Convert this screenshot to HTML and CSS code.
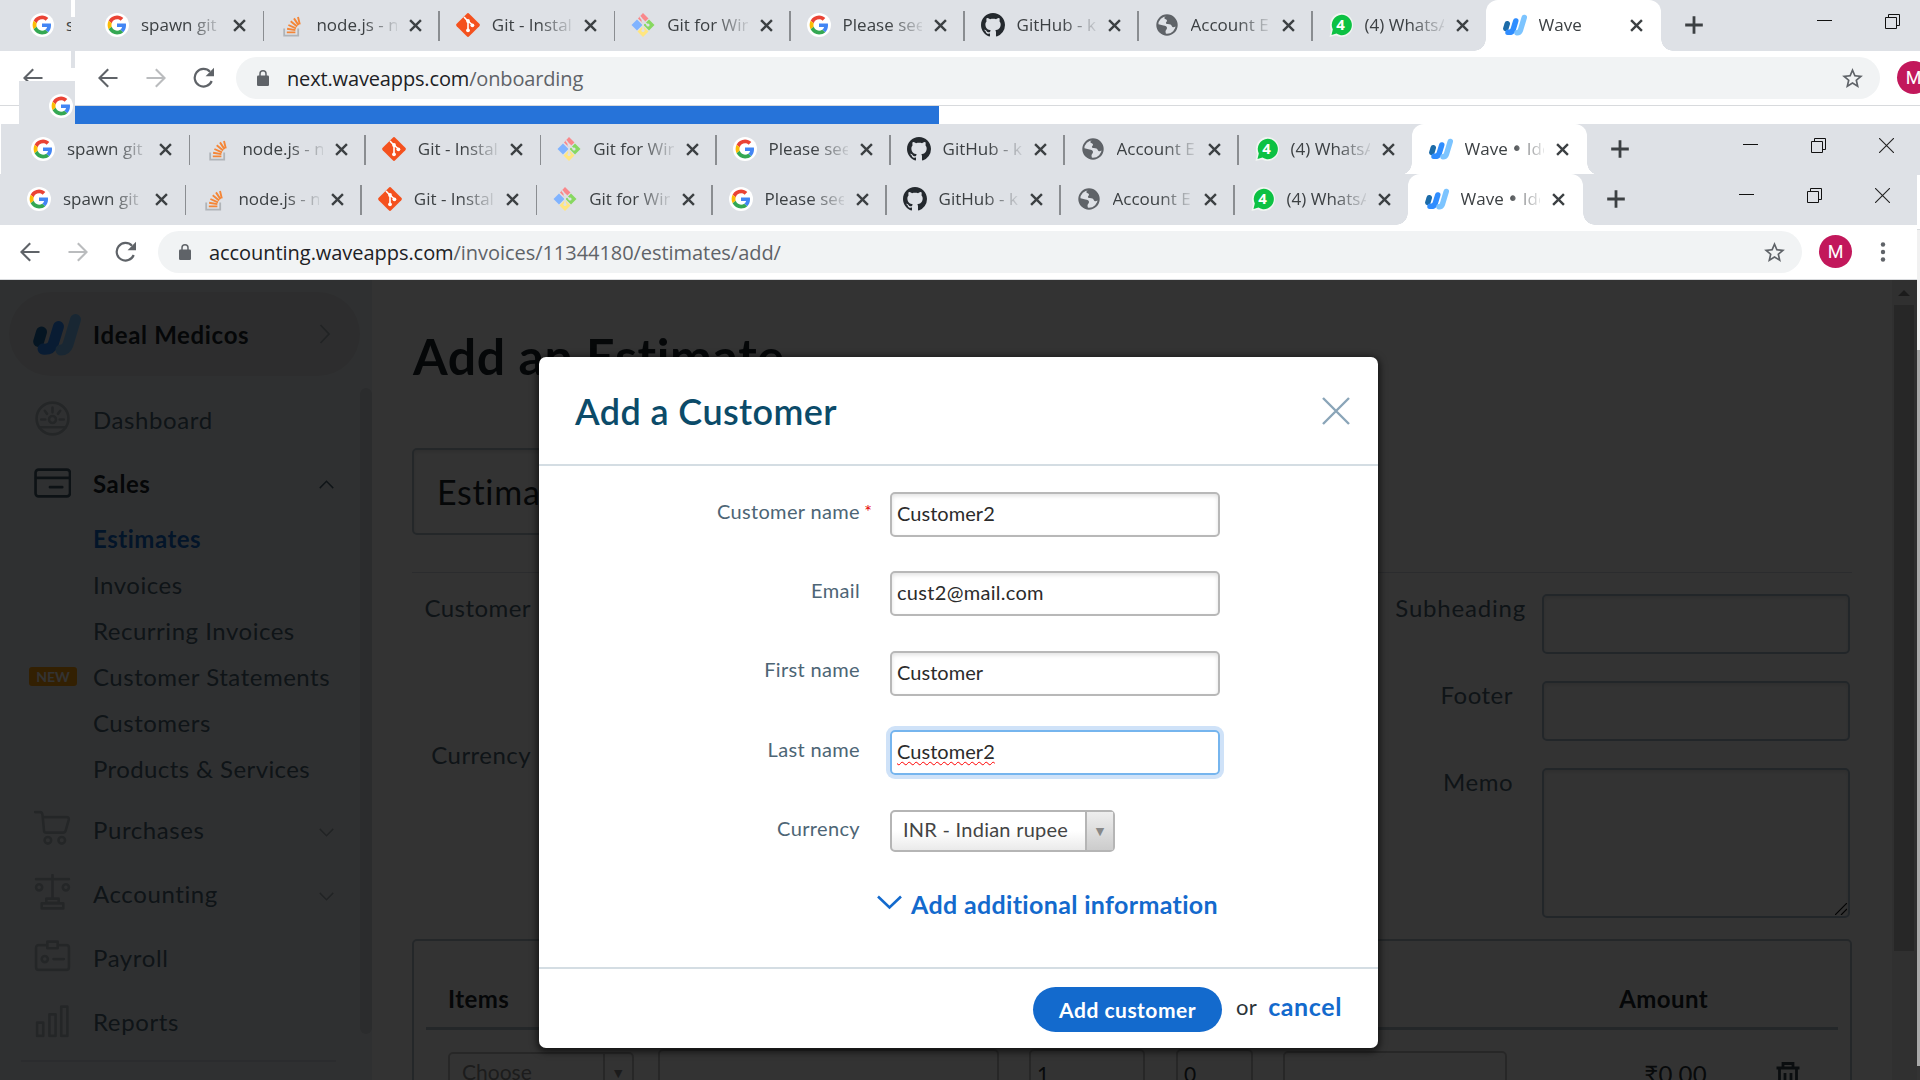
FILE: index.html
```
<!DOCTYPE html>
<html lang="en">
<head>
<meta charset="utf-8">
<title>Wave - Add a Customer</title>
<link rel="stylesheet" href="styles.css">
</head>
<body>
<svg class="defs" aria-hidden="true">
  <symbol id="google" viewBox="0 0 24 24"><circle cx="12" cy="12" r="12" fill="#fff"/><g transform="translate(2.6 2.6) scale(.392)"><path fill="#EA4335" d="M24 9.5c3.54 0 6.71 1.22 9.21 3.6l6.85-6.85C35.9 2.38 30.47 0 24 0 14.62 0 6.51 5.38 2.56 13.22l7.98 6.19C12.43 13.72 17.74 9.5 24 9.5z"/><path fill="#4285F4" d="M46.98 24.55c0-1.57-.15-3.09-.38-4.55H24v9.02h12.94c-.58 2.96-2.26 5.48-4.78 7.18l7.73 6c4.51-4.18 7.09-10.36 7.09-17.65z"/><path fill="#FBBC05" d="M10.53 28.59c-.48-1.45-.76-2.99-.76-4.59s.27-3.14.76-4.59l-7.98-6.19C.92 16.46 0 20.12 0 24c0 3.88.92 7.54 2.56 10.78l7.97-6.19z"/><path fill="#34A853" d="M24 48c6.48 0 11.93-2.13 15.89-5.81l-7.73-6c-2.15 1.45-4.92 2.3-8.16 2.3-6.26 0-11.57-4.22-13.47-9.91l-7.98 6.19C6.51 42.62 14.62 48 24 48z"/></g></symbol>
  <symbol id="stack" viewBox="0 0 24 24"><path d="M4.2 15.5v7.2h14v-7.2" fill="none" stroke="#b0b4b8" stroke-width="1.8"/><path d="M6.8 19.4h8.6M7.1 15.8l8.3 1.3M8.400 12l7.600 3.400M10.700 8.300l6.400 5.100M14 5.400l4.500 6.700M18 4l1.800 7.400" stroke="#f48637" stroke-width="1.900" fill="none"/></symbol>
  <symbol id="git" viewBox="0 0 24 24"><path d="M10.8.7a1.7 1.7 0 0 1 2.4 0l10.1 10.1a1.7 1.7 0 0 1 0 2.4L13.2 23.3a1.7 1.7 0 0 1-2.4 0L.7 13.2a1.7 1.7 0 0 1 0-2.4z" fill="#f4511e"/><path d="M8 4l4 4.200v9M12 8l4.400 4" stroke="#fff" stroke-width="1.600" fill="none"/><circle cx="12" cy="8" r="1.900" fill="#fff"/><circle cx="12" cy="17.300" r="1.900" fill="#fff"/><circle cx="16.400" cy="12.300" r="1.900" fill="#fff"/></symbol>
  <symbol id="gitwin" viewBox="0 0 24 24"><path d="M12 0l5.500 5.500-5.500 5-5-5z" fill="#f9888b"/><path d="M6 6.500l5.500 5.500L6 17.500.5 12z" fill="#80b3ff"/><path d="M18 6.500l5.500 5.500-5.500 5.500-5.500-5.500z" fill="#87d860"/><path d="M12 13l5.500 5.500L12 24l-5.500-5.500z" fill="#ffe680"/><path d="M9 3.500l3 4V18M12 7.500l4.500 4.500" fill="none" stroke="#dee1e6" stroke-width="1.500"/><circle cx="12" cy="8" r="1.600" fill="#dee1e6"/><circle cx="12" cy="17.500" r="1.600" fill="#dee1e6"/><circle cx="17" cy="12" r="1.600" fill="#dee1e6"/></symbol>
  <symbol id="github" viewBox="0 0 16 16"><path fill="#24292e" d="M8 0C3.58 0 0 3.58 0 8c0 3.54 2.29 6.53 5.47 7.59.4.07.55-.17.55-.38 0-.19-.01-.82-.01-1.49-2.01.37-2.53-.49-2.69-.94-.09-.23-.48-.94-.82-1.13-.28-.15-.68-.52-.01-.53.63-.01 1.08.58 1.23.82.72 1.21 1.87.87 2.33.66.07-.52.28-.87.51-1.07-1.78-.2-3.64-.89-3.64-3.95 0-.87.31-1.59.82-2.15-.08-.2-.36-1.02.08-2.12 0 0 .67-.21 2.2.82.64-.18 1.32-.27 2-.27s1.36.09 2 .27c1.53-1.04 2.2-.82 2.2-.82.44 1.1.16 1.92.08 2.12.51.56.82 1.27.82 2.15 0 3.07-1.87 3.75-3.65 3.95.29.25.54.73.54 1.48 0 1.07-.01 1.93-.01 2.2 0 .21.15.46.55.38A8.01 8.01 0 0 0 16 8c0-4.420-3.580-8-8-8z"/></symbol>
  <symbol id="globe" viewBox="0 0 24 24"><circle cx="12" cy="12" r="9.700" fill="none" stroke="#5f6368" stroke-width="2"/><path fill="#5f6368" d="M2.500 11l6 1.500c2 .3 3.500 1 3.500 2.500s-1.500 2-1.500 3.500l.5 3.500C6 21.500 2 17 2.500 11zM12 2.300c-1.500 1.200-3 1.700-2.500 3.200.4 1 2.300.5 2.500 2 .2 1.300-1.500 1.500-1 2.800.6 1.400 3 .5 4.500 1.200 1.500.8 1 2.500 2.500 2.700 1.300.2 2.500-.7 3.500-1.200C22 7 18 2 12 2.300z"/></symbol>
  <symbol id="whatsapp" viewBox="0 0 24 24"><path d="M12.500 0a11.500 12 0 1 1-5.500 22.500L.5 24l1.500-7A11.500 12 0 0 1 12.500 0z" fill="#f1f5f2"/><path d="M12.500 1.800a10 10.200 0 1 1-5 18.800L2.500 22l1.300-5.500a10 10.200 0 0 1 8.700-14.700z" fill="#0cc143"/></symbol>
  <symbol id="wave" viewBox="0 0 48 42"><g fill="none" stroke-linecap="round" stroke-width="11"><path d="M8.500 18.500L5.700 28" stroke="#1c6ba8"/><path d="M25.500 13L20 31Q17.500 36.500 10 35.500" stroke="#2f8dff"/><path d="M42.500 6L35 31Q33 36.500 28 36.500" stroke="#7cc4ff"/></g></symbol>
  <symbol id="close" viewBox="0 0 12 12"><path d="M1 1l10 10M11 1L1 11" stroke="#3c4043" stroke-width="2.200"/></symbol>
  <symbol id="plus" viewBox="0 0 18 18"><path d="M9 .2v17.600M.2 9h17.600" stroke="#3c4043" stroke-width="2.800"/></symbol>
  <symbol id="min" viewBox="0 0 15 15"><path d="M0 6.500h15" stroke="#111" stroke-width="1"/></symbol>
  <symbol id="restore" viewBox="0 0 15 15"><path d="M.5 3.500h11v11H.5zM3.500 3.500v-3h11v11h-3" fill="none" stroke="#111"/></symbol>
  <symbol id="winclose" viewBox="0 0 15 15"><path d="M0 0l15 15M15 0L0 15" stroke="#222" stroke-width="1.100"/></symbol>
  <symbol id="back" viewBox="0 0 20 20"><path d="M19.500 10H2M10.200 1.200L1.400 10l8.800 8.800" fill="none" stroke="#5f6368" stroke-width="2.100"/></symbol>
  <symbol id="fwd" viewBox="0 0 20 20"><path d="M.5 10H18M9.800 1.200l8.800 8.800-8.800 8.800" fill="none" stroke="#babcbe" stroke-width="2.100"/></symbol>
  <symbol id="reload" viewBox="0 0 22 22"><path d="M18.700 14A8.800 8.800 0 1 1 17 4.800" fill="none" stroke="#5f6368" stroke-width="2.200"/><path d="M21 .8v8.400h-8.400z" fill="#5f6368"/></symbol>
  <symbol id="lock" viewBox="0 0 12 16"><rect y="5.500" width="12" height="10.500" rx="1.300" fill="#5f6368"/><path d="M3 6V3.800a3 3 0 0 1 6 0V6" fill="none" stroke="#5f6368" stroke-width="1.500"/></symbol>
  <symbol id="star" viewBox="0 0 24 24"><path d="M22 9.240l-7.190-.62L12 2 9.190 8.630 2 9.240l5.460 4.730L5.820 21 12 17.270 18.180 21l-1.630-7.030L22 9.240zM12 15.400l-3.760 2.270 1-4.280-3.320-2.880 4.380-.38L12 6.100l1.710 4.040 4.380.38-3.320 2.880 1 4.280L12 15.400z" fill="#5f6368"/></symbol>
  <symbol id="dots" viewBox="0 0 6 20"><circle cx="3" cy="2.500" r="2.200"/><circle cx="3" cy="10" r="2.200"/><circle cx="3" cy="17.500" r="2.200"/></symbol>
</svg>

<section class="window win-a">
  <div class="strip"><div class="tab"><svg class="fav"><use href="#google"/></svg><span class="tab-text">s</span></div></div>
  <div class="toolbar"><svg class="nav"><use href="#back"/></svg></div>
</section>
<section class="window win-a2"><div class="strip"></div><div class="toolbar"></div></section>
<section class="window win-a3"><div class="strip"><div class="tab"><svg class="fav"><use href="#google"/></svg></div></div></section>

<section class="window win-b">
  <div class="strip">
    <div class="tab"><svg class="fav"><use href="#google"/></svg><span class="tab-text">spawn git</span><svg class="x"><use href="#close"/></svg></div>
    <div class="tab"><svg class="fav"><use href="#stack"/></svg><span class="tab-text">node.js - n</span><svg class="x"><use href="#close"/></svg></div>
    <div class="tab"><svg class="fav"><use href="#git"/></svg><span class="tab-text">Git - Instal</span><svg class="x"><use href="#close"/></svg></div>
    <div class="tab"><svg class="fav"><use href="#gitwin"/></svg><span class="tab-text">Git for Win</span><svg class="x"><use href="#close"/></svg></div>
    <div class="tab narrow"><svg class="fav"><use href="#google"/></svg><span class="tab-text">Please see</span><svg class="x"><use href="#close"/></svg></div>
    <div class="tab narrow"><svg class="fav"><use href="#github"/></svg><span class="tab-text">GitHub - k</span><svg class="x"><use href="#close"/></svg></div>
    <div class="tab narrow"><svg class="fav"><use href="#globe"/></svg><span class="tab-text">Account E</span><svg class="x"><use href="#close"/></svg></div>
    <div class="tab narrow last"><span class="fav wa"><svg><use href="#whatsapp"/></svg><b>4</b></span><span class="tab-text">(4) WhatsA</span><svg class="x"><use href="#close"/></svg></div>
    <div class="tab active"><svg class="fav"><use href="#wave"/></svg><span class="tab-text">Wave</span><svg class="x"><use href="#close"/></svg></div>
    <svg class="plus"><use href="#plus"/></svg>
    <div class="controls"><svg><use href="#min"/></svg><svg><use href="#restore"/></svg><svg><use href="#winclose"/></svg></div>
  </div>
  <div class="toolbar">
    <svg class="nav"><use href="#back"/></svg><svg class="nav"><use href="#fwd"/></svg><svg class="nav rel"><use href="#reload"/></svg>
    <div class="omnibox"><svg class="lock"><use href="#lock"/></svg><span class="url short"><b>next.waveapps.com</b>/onboarding</span><svg class="star"><use href="#star"/></svg></div>
    <span class="avatar">M</span><svg class="dots"><use href="#dots"/></svg>
  </div>
  <div class="progress"></div>
</section>

<section class="window win-c">
  <div class="strip">
    <div class="tab"><svg class="fav"><use href="#google"/></svg><span class="tab-text">spawn git</span><svg class="x"><use href="#close"/></svg></div>
    <div class="tab"><svg class="fav"><use href="#stack"/></svg><span class="tab-text">node.js - n</span><svg class="x"><use href="#close"/></svg></div>
    <div class="tab"><svg class="fav"><use href="#git"/></svg><span class="tab-text">Git - Instal</span><svg class="x"><use href="#close"/></svg></div>
    <div class="tab"><svg class="fav"><use href="#gitwin"/></svg><span class="tab-text">Git for Win</span><svg class="x"><use href="#close"/></svg></div>
    <div class="tab narrow"><svg class="fav"><use href="#google"/></svg><span class="tab-text">Please see</span><svg class="x"><use href="#close"/></svg></div>
    <div class="tab narrow"><svg class="fav"><use href="#github"/></svg><span class="tab-text">GitHub - k</span><svg class="x"><use href="#close"/></svg></div>
    <div class="tab narrow"><svg class="fav"><use href="#globe"/></svg><span class="tab-text">Account E</span><svg class="x"><use href="#close"/></svg></div>
    <div class="tab narrow last"><span class="fav wa"><svg><use href="#whatsapp"/></svg><b>4</b></span><span class="tab-text">(4) WhatsA</span><svg class="x"><use href="#close"/></svg></div>
    <div class="tab active"><svg class="fav"><use href="#wave"/></svg><span class="tab-text">Wave <em>•</em> Ide</span><svg class="x"><use href="#close"/></svg></div>
    <svg class="plus"><use href="#plus"/></svg>
    <div class="controls"><svg><use href="#min"/></svg><svg><use href="#restore"/></svg><svg><use href="#winclose"/></svg></div>
  </div>
  <div class="toolbar"></div>
  <div class="back-scroll"></div>
</section>

<section class="window win-d">
  <div class="strip">
    <div class="tab"><svg class="fav"><use href="#google"/></svg><span class="tab-text">spawn git</span><svg class="x"><use href="#close"/></svg></div>
    <div class="tab"><svg class="fav"><use href="#stack"/></svg><span class="tab-text">node.js - n</span><svg class="x"><use href="#close"/></svg></div>
    <div class="tab"><svg class="fav"><use href="#git"/></svg><span class="tab-text">Git - Instal</span><svg class="x"><use href="#close"/></svg></div>
    <div class="tab"><svg class="fav"><use href="#gitwin"/></svg><span class="tab-text">Git for Win</span><svg class="x"><use href="#close"/></svg></div>
    <div class="tab narrow"><svg class="fav"><use href="#google"/></svg><span class="tab-text">Please see</span><svg class="x"><use href="#close"/></svg></div>
    <div class="tab narrow"><svg class="fav"><use href="#github"/></svg><span class="tab-text">GitHub - k</span><svg class="x"><use href="#close"/></svg></div>
    <div class="tab narrow"><svg class="fav"><use href="#globe"/></svg><span class="tab-text">Account E</span><svg class="x"><use href="#close"/></svg></div>
    <div class="tab narrow last"><span class="fav wa"><svg><use href="#whatsapp"/></svg><b>4</b></span><span class="tab-text">(4) WhatsA</span><svg class="x"><use href="#close"/></svg></div>
    <div class="tab active"><svg class="fav"><use href="#wave"/></svg><span class="tab-text">Wave <em>•</em> Ide</span><svg class="x"><use href="#close"/></svg></div>
    <svg class="plus"><use href="#plus"/></svg>
    <div class="controls"><svg><use href="#min"/></svg><svg><use href="#restore"/></svg><svg><use href="#winclose"/></svg></div>
  </div>
  <div class="toolbar">
    <svg class="nav"><use href="#back"/></svg><svg class="nav"><use href="#fwd"/></svg><svg class="nav rel"><use href="#reload"/></svg>
    <div class="omnibox"><svg class="lock"><use href="#lock"/></svg><span class="url"><b>accounting.waveapps.com</b>/invoices/11344180/estimates/add/</span><svg class="star"><use href="#star"/></svg></div>
    <span class="avatar">M</span><svg class="dots"><use href="#dots"/></svg>
  </div>

  <div class="page">
    <aside class="sidebar">
      <div class="business"><svg class="logo"><use href="#wave"/></svg><span>Ideal Medicos</span><svg class="chev" viewBox="0 0 12 20"><path d="M1.500 1l8.500 9-8.500 9"/></svg></div>
      <div class="side-scroll">
        <nav class="menu">
          <div class="item"><svg class="mi" viewBox="0 0 36 36"><circle cx="18" cy="18" r="15.500"/><path d="M5 26.500h26M18 7.500v4.500M10.500 10.500l2.200 3M25.500 10.500l-2.200 3M7 19h4M25 19h4"/><circle cx="18" cy="19" r="3.400"/></svg><span>Dashboard</span></div>
          <div class="item on"><svg class="mi" viewBox="0 0 36 36"><rect x="1.500" y="5.500" width="33.500" height="26" rx="3"/><path d="M2 13.500h33M15.500 22.500h12"/></svg><span>Sales</span><svg class="ar" viewBox="0 0 14 8"><path d="M.7 7.400L7 1l6.300 6.400"/></svg></div>
          <div class="sub current">Estimates</div>
          <div class="sub">Invoices</div>
          <div class="sub">Recurring Invoices</div>
          <div class="sub"><span class="badge">NEW</span>Customer Statements</div>
          <div class="sub">Customers</div>
          <div class="sub end">Products &amp; Services</div>
          <div class="item"><svg class="mi" viewBox="0 0 36 36"><path d="M1 2h5q2 0 2.300 3l1.500 15.500q.2 1.500 2 1.500h16.500q2 0 2.500-2l3-10.500q.5-2.500-2-2.500H8.500"/><circle cx="13.500" cy="29.500" r="3.200"/><circle cx="27" cy="29.500" r="3.200"/></svg><span>Purchases</span><svg class="ar" viewBox="0 0 14 8"><path d="M.7.6L7 7 13.300.6"/></svg></div>
          <div class="item"><svg class="mi" viewBox="0 0 36 36"><path d="M2 5h32M18 1v23M12 24h12v4H12zM7.500 28.500h21v5h-21z"/><circle cx="5" cy="13" r="3"/><circle cx="31" cy="13" r="3"/></svg><span>Accounting</span><svg class="ar" viewBox="0 0 14 8"><path d="M.7.6L7 7 13.300.6"/></svg></div>
          <div class="item"><svg class="mi" viewBox="0 0 36 36"><path d="M11 7H4.500Q2 7 2 9.500v19q0 2.500 2.500 2.500h27q2.500 0 2.500-2.500v-19Q34 7 31.500 7H25M13 3.500h10V10H13zM19 20.500h10"/><circle cx="10.500" cy="20.500" r="3"/></svg><span>Payroll</span></div>
          <div class="item"><svg class="mi" viewBox="0 0 36 36"><path d="M3 20h6v13H3zM15 12h6v21h-6zM26.500 4.500h6V33h-6z"/></svg><span>Reports</span></div>
          <div class="rule"></div>
        </nav>
        <div class="side-thumb"></div>
      </div>
    </aside>
    <main class="main">
      <h1>Add an Estimate</h1>
      <div class="title-box">Estimate</div>
      <div class="details">
        <div class="left-col"><span>Customer</span><span>Currency</span></div>
        <div class="right-col">
          <label class="wide">Subheading</label><div class="field"></div>
          <label>Footer</label><div class="field"></div>
          <label>Memo</label><div class="field memo"><svg viewBox="0 0 12 12"><path d="M0 12L12 0M6 12l6-6" stroke="#111" stroke-width="1.200"/></svg></div>
        </div>
      </div>
      <div class="items">
        <div class="items-head"><span>Items</span><span>Amount</span></div>
        <div class="items-row">
          <div class="cell choose"><span>Choose</span><i>▼</i></div>
          <div class="cell desc"></div><div class="cell qty">1</div><div class="cell price">0</div><div class="cell tax"></div>
          <span class="sum">₹0.00</span>
          <svg class="trash" viewBox="0 0 24 28"><path d="M.5 7h23M7 6V2.500h10V6M3.500 8v18h17V8M9 12v11M15 12v11"/></svg>
        </div>
      </div>
    </main>
    <div class="page-scroll"><svg viewBox="0 0 12 6"><path d="M0 6l6-6 6 6z"/></svg><div></div></div>
    <div class="overlay"></div>

    <div class="modal">
      <header><h2>Add a Customer</h2><svg viewBox="0 0 28 28"><path d="M1 1l26 26M27 1L1 27"/></svg></header>
      <div class="form">
        <div class="row"><label>Customer name<sup>*</sup></label><div class="input">Customer2</div></div>
        <div class="row"><label>Email</label><div class="input mail">cust2@mail.com</div></div>
        <div class="row"><label>First name</label><div class="input">Customer</div></div>
        <div class="row"><label>Last name</label><div class="input focus"><span>Customer2</span></div></div>
        <div class="row"><label>Currency</label><div class="select"><span>INR - Indian rupee</span><i>▼</i></div></div>
        <a class="more"><svg viewBox="0 0 25 15"><path d="M1 1.500l11.500 11L24 1.500"/></svg>Add additional information</a>
      </div>
      <footer><button>Add customer</button><span>or</span><a>cancel</a></footer>
    </div>
  </div>
</section>
</body>
</html>
```
FILE: styles.css
```
* { box-sizing: border-box; }
body { margin: 0; width: 1920px; height: 1080px; overflow: hidden; position: relative; background: #fff; font-family: Lato, "Noto Sans", sans-serif; }
svg { display: block; flex: none; }
.defs { position: absolute; width: 0; height: 0; }

/* Browser windows stacked on the desktop */
.window { position: absolute; background: #fff; overflow: hidden; width: 1920px; }
.win-a { left: 0; top: 0; width: 71px; height: 124px; }
.win-a2 { left: 71px; top: 17px; width: 4px; height: 107px; }
.win-a3 { left: 19px; top: 81px; width: 56px; height: 43px; }
.win-b { left: 75px; top: 0; height: 124px; }
.win-c { left: 1px; top: 124px; height: 956px; }
.win-d { left: -3px; top: 174px; height: 906px; }

.strip { height: 51px; background: #dee1e6; display: flex; padding-left: 14px; font-family: "Open Sans", "Noto Sans", sans-serif; }
.tab { width: 175.400px; height: 50px; display: flex; align-items: center; padding: 0 18px 0 16px; position: relative; flex: none; }
.tab.narrow { width: 174px; }
.tab.last { width: 173px; padding-right: 17px; }
.tab::after { content: ""; position: absolute; right: 0; top: 11px; width: 1.500px; height: 30px; background: #8a8d91; }
.tab.last::after { display: none; }
.tab.active::after { display: none; }
.tab.active { width: 175px; height: 51px; background: #fff; border-radius: 12px 12px 0 0; padding-left: 17px; padding-bottom: 1px; }
.tab.active::before { content: ""; position: absolute; left: -12px; right: -12px; bottom: 0; height: 12px; background: radial-gradient(circle at 0 0, transparent 11.500px, #fff 12px) left / 12px 12px no-repeat, radial-gradient(circle at 100% 0, transparent 11.500px, #fff 12px) right / 12px 12px no-repeat; }
.fav { width: 24px; height: 24px; margin-right: 12px; flex: none; }
.wa { position: relative; }
.wa svg { width: 24px; height: 24px; }
.wa b { position: absolute; inset: 0; text-align: center; font-size: 15px; line-height: 23px; color: #fff; }
.tab-text { flex: 1; min-width: 0; font-size: 17px; line-height: 24px; color: #3c4043; white-space: nowrap; overflow: hidden; -webkit-mask-image: linear-gradient(90deg, #000 calc(100% - 34px), rgba(0, 0, 0, .12)); mask-image: linear-gradient(90deg, #000 calc(100% - 34px), rgba(0, 0, 0, .12)); }
.tab-text em { font-style: normal; font-size: 19px; line-height: 20px; font-family: "DejaVu Sans", sans-serif; margin-left: -1px; }
.win-a .tab-text { flex: none; -webkit-mask-image: none; mask-image: none; }
.x { width: 13px; height: 13px; margin-left: 12px; }
.plus { width: 18px; height: 18px; margin: 16px 0 0 24px; }
.controls { display: flex; gap: 53px; margin: 14px 27px 0 auto; }
.controls svg { width: 15px; height: 15px; }

.toolbar { height: 55px; border-bottom: 1px solid #d8dadd; padding: 0 33px 1px 23px; display: flex; align-items: center; background: #fff; }
.win-a .toolbar, .win-a2 .toolbar { padding-right: 0; }
.nav { width: 20px; height: 20px; margin-right: 28px; }
.rel { width: 22px; height: 22px; margin: 0 21px 0 -1px; }
.omnibox { height: 42px; width: 1644px; border-radius: 21px; background: #f1f3f4; display: flex; align-items: center; padding: 0 15px 0 21px; flex: none; margin: 1px 0 0 1px; }
.rel + .omnibox { margin-left: 0; }
.lock { width: 12px; height: 16px; margin-bottom: 1px; }
.url { font: 20px "Open Sans", "Noto Sans", sans-serif; letter-spacing: -.05px; color: #5f6368; margin-left: 18px; flex: 1; }
.url.short { letter-spacing: -.15px; }
.url b { font-weight: 400; color: #202124; }
.star { width: 25px; height: 25px; }
.avatar { width: 33px; height: 33px; border-radius: 50%; background: #c2185b; color: #fff; font: 18px/33px Roboto, sans-serif; text-align: center; margin-left: 17px; flex: none; }
.dots { width: 6px; height: 20px; margin-left: 28px; fill: #5f6368; }
.progress { width: 864px; height: 18px; background: #2673d9; }
.back-scroll { width: 20px; height: 850px; margin-left: auto; border-bottom: 14px solid #333; background: linear-gradient(#f1f1f1 120px, #a8a8a8 120px, #a8a8a8 836px, #333 836px); }

/* Estimate page */
.page { position: relative; height: 800px; display: flex; background: #fff; overflow: hidden; }
.sidebar { width: 375px; flex: none; background: #ecf1f5; padding-top: 12px; color: #4d6575; font-size: 24px; }
.business { margin: 0 12px 0 12px; height: 84px; border-radius: 42px; background: #dfe1e5; display: flex; align-items: center; padding: 0 29px 0 24px; color: #1c252c; font-weight: 700; letter-spacing: .66px; }
.logo { width: 48px; height: 43px; margin-right: 12px; }
.business span { flex: 1; }
.chev { width: 12px; height: 20px; fill: none; stroke: #a5adb3; stroke-width: 1.800; }
.side-scroll { display: flex; margin-top: 12px; height: 692px; }
.menu { flex: 1; }
.side-thumb { width: 12px; height: 646px; border-radius: 6px; background: #d6d9e0; }
.item { height: 64px; display: flex; align-items: center; padding: 0 26px 0 37px; letter-spacing: .6px; }
.item span { flex: 1; margin-top: -2px; }
.mi { width: 37px; height: 37px; margin: 0 22px 3px 0; fill: none; stroke: #b4bcc3; stroke-width: 2.600; stroke-linecap: round; stroke-linejoin: round; }
.on .mi { stroke: #43596a; }
.item.on { font-weight: 700; color: #1c252c; }
.ar { width: 15px; height: 9px; margin-top: 4px; fill: none; stroke: #a5adb3; stroke-width: 1.400; }
.on .ar { stroke: #4d6575; margin-top: 0; }
.sub { position: relative; height: 46px; line-height: 46px; padding-left: 96px; letter-spacing: .52px; }
.sub.end { margin-bottom: 6px; letter-spacing: .4px; }
.current { font-weight: 700; color: #136acd; }
.badge { position: absolute; left: 32px; top: 13px; width: 48px; height: 19px; border-radius: 3px; background: #ff9e0b; color: #fff; font-size: 14px; line-height: 19px; font-weight: 700; text-align: center; letter-spacing: 0; }
.rule { margin: 6px 24px 0; height: 2px; background: #d4dde3; }

.main { width: 1440px; margin-left: 40px; flex: none; color: #4d6575; font-size: 24px; }
h1 { margin: 46px 0 0 1px; font-size: 50px; line-height: 60px; font-weight: 700; letter-spacing: .6px; color: #1c252c; }
.title-box { width: 700px; height: 87px; margin-top: 62px; border: 2px solid #b2c2cd; border-radius: 5px; font-size: 34px; line-height: 83px; padding-left: 23px; letter-spacing: .7px; color: #1c252c; box-shadow: inset 0 2px 4px #e6e6e6; }
.details { margin-top: 37px; height: 367px; border-top: 1px solid #d4dde3; display: flex; justify-content: space-between; padding-right: 2px; }
.left-col { width: 119px; display: flex; flex-direction: column; gap: 118px; padding-top: 20px; text-align: right; line-height: 29px; letter-spacing: .45px; }
.right-col { display: grid; grid-template-columns: 170px 308px; grid-auto-rows: 60px; gap: 27px 0; padding-top: 21px; }
.right-col label { text-align: right; padding-right: 29px; line-height: 27px; letter-spacing: .5px; }
.right-col .wide { padding-right: 16px; letter-spacing: .8px; }
.field { border: 2px solid #a9bccb; border-radius: 5px; box-shadow: inset 0 2px 4px #e6e6e6; }
.memo { height: 150px; display: flex; justify-content: flex-end; align-items: flex-end; padding: 1px; }
.memo svg { width: 12px; height: 12px; }
.items { border: 2px solid #b2c2cd; border-radius: 5px; height: 200px; padding: 0 12px; }
.items-head { height: 89px; border-bottom: 3px solid #b2c2cd; display: flex; justify-content: space-between; padding: 43px 130px 0 22px; font-weight: 700; color: #1c252c; letter-spacing: .4px; }
.items-row { display: flex; align-items: flex-start; padding: 19px 0 0 22px; font-size: 21px; line-height: 46px; color: #2b3338; }
.cell { height: 60px; border: 2px solid #c4c4c4; border-radius: 5px; padding-left: 6px; flex: none; }
.choose { width: 186px; margin-top: 3px; display: flex; padding-left: 12px; line-height: 35px; color: #8c8c8c; }
.choose span { width: 143px; border-right: 2px solid #c4c4c4; }
.choose i { font: 11px/40px "DejaVu Sans"; margin-left: 9px; color: #888; }
.desc { width: 341px; margin-left: 24px; }
.qty { width: 116px; margin-left: 30px; }
.price { width: 77px; margin-left: 31px; }
.tax { width: 224px; margin: 2px 0 0 30px; }
.sum { width: 200px; text-align: right; font: 24px/50px Lato, "Noto Sans", sans-serif; letter-spacing: .3px; }
.trash { width: 24px; height: 28px; margin: 12px 0 0 69px; fill: none; stroke: #33424d; stroke-width: 2.800; }
.page-scroll { width: 25px; margin-left: auto; background: #f1f1f1; padding: 10px 3px 0 2px; display: flex; flex-direction: column; align-items: center; gap: 9px; }
.page-scroll svg { width: 12px; height: 6px; fill: #888; }
.page-scroll div { width: 20px; height: 646px; background: #c1c1c1; }
.overlay { position: absolute; inset: 0; background: rgba(0, 0, 0, .8); }

/* Customer dialog */
.modal { position: absolute; left: 542px; top: 77px; width: 839px; height: 691px; background: #fff; border-radius: 7px; box-shadow: 0 2px 7px 2px rgba(0, 0, 0, .6); }
.modal header { height: 109px; border-bottom: 2px solid #d4dde3; padding: 0 28px 0 36px; display: flex; align-items: center; justify-content: space-between; }
h2 { margin: 0; font-size: 36px; line-height: 44px; font-weight: 600; color: #0b4b69; letter-spacing: .4px; }
.modal header svg { width: 28px; height: 28px; fill: none; stroke: #8aa5b8; stroke-width: 2.400; }
.form { height: 503px; padding-top: 26px; border-bottom: 2px solid #d4dde3; font-size: 20px; }
.row { display: grid; grid-template-columns: 321px auto; column-gap: 30px; justify-content: start; align-items: center; height: 45px; margin-bottom: 34.400px; }
.row label { position: relative; text-align: right; color: #4d6575; letter-spacing: .35px; padding-bottom: 8px; }
.row sup { position: absolute; right: -12px; top: 2px; font-size: 18px; line-height: 20px; color: #e60000; letter-spacing: 0; }
.input { width: 330px; height: 45px; border: 2px solid #b8b8b8; border-radius: 5px; padding-left: 5px; line-height: 38px; color: #2b2b2b; letter-spacing: .05px; box-shadow: inset 0 2px 4px #e2e2e2; }
.mail { letter-spacing: .3px; }
.focus { border-color: #76b5ee; box-shadow: 0 0 0 4px #cfe2f8; }
.focus span { text-decoration: underline wavy #f00 1px; text-underline-offset: 2px; text-decoration-skip-ink: none; }
.select { width: 225px; height: 42px; margin-top: -3px; border: 2px solid #b5b5b5; border-radius: 5px; display: flex; background: linear-gradient(#fff 50%, #eaeaea); color: #444; line-height: 34px; padding-left: 11px; letter-spacing: .25px; }
.select span { flex: 1; white-space: nowrap; }
.select i { width: 28px; border-left: 2px solid #b5b5b5; background: linear-gradient(#eee, #ccc); font: 11px/39px "DejaVu Sans"; text-align: center; color: #888; }
.more { display: flex; align-items: center; margin: 1px 0 0 338px; line-height: 30px; font-size: 25px; font-weight: 700; color: #136acd; letter-spacing: .34px; }
.more svg { width: 25px; height: 15px; margin: -2px 9px 0 0; fill: none; stroke: #136acd; stroke-width: 2.600; }
.modal footer { display: flex; align-items: center; justify-content: flex-end; padding: 18px 36px 0 0; color: #2b3338; font-size: 22px; }
.modal footer span { margin: -7px 11px 0 14px; letter-spacing: .3px; }
.modal footer a { margin-top: -7px; font-size: 25px; line-height: 30px; font-weight: 700; color: #136acd; letter-spacing: .6px; }
button { width: 189px; height: 45px; border: 0; border-radius: 23px; background: #136acd; color: #fff; font: 700 21px Lato, sans-serif; letter-spacing: .5px; padding: 0 0 1px; }
```
